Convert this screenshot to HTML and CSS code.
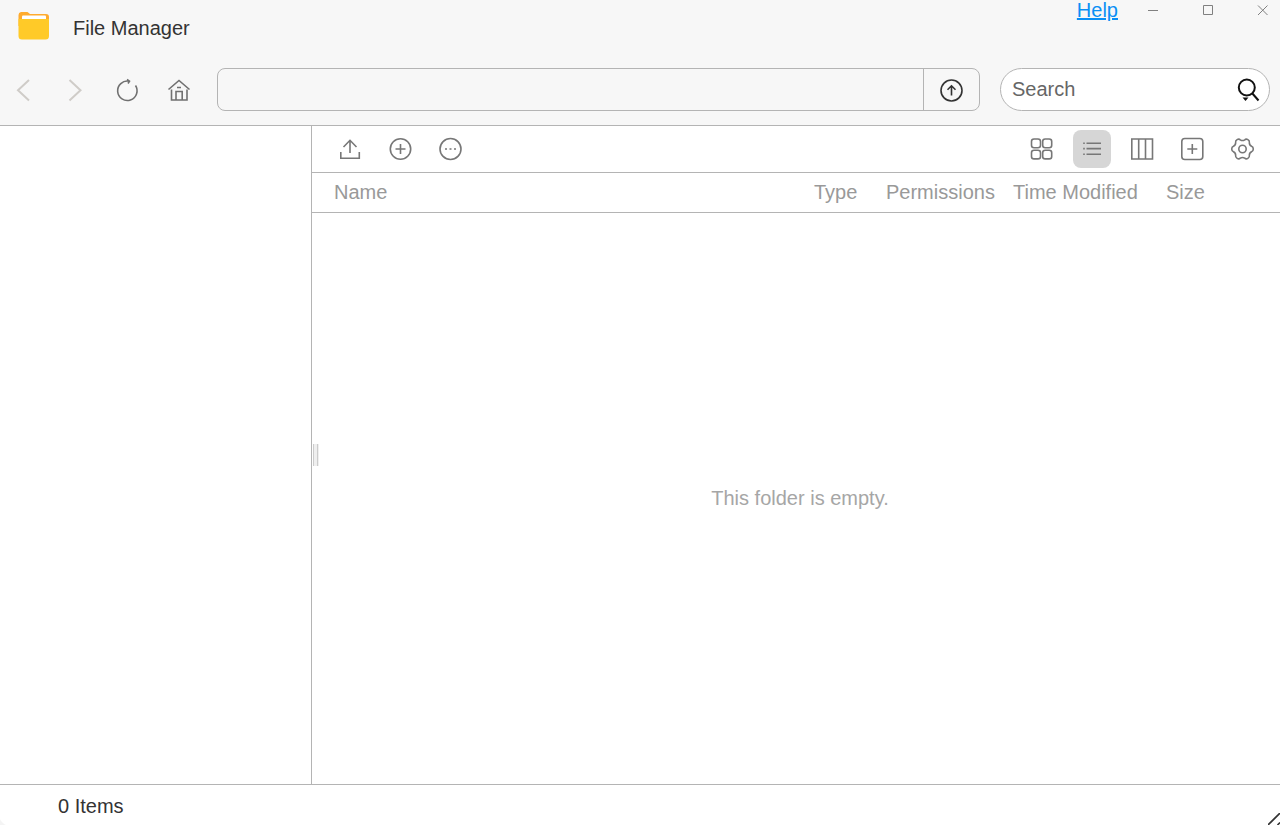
FILE: index.html
```
<!DOCTYPE html>
<html lang="en">
<head>
    <meta charset="UTF-8">
    <meta name="viewport" content="width=device-width, initial-scale=1.0">
    <title>File Manager</title>
    <link rel="stylesheet" href="styles.css">
</head>
<body>
    <header class="header">
        <div class="titlebar">
            <svg class="folder" width="32" height="28" viewBox="0 0 32 28">
                <path d="M3 0H9.500L12 2H28a3 3 0 0 1 3 3V14H0.500V3A3 3 0 0 1 3 0z" fill="#ffab2e"/>
                <rect x="4" y="3.500" width="24" height="8" rx="1" fill="#fff"/>
                <path d="M.5 7H31V24a3.500 3.500 0 0 1-3.500 3.500H4A3.500 3.500 0 0 1 .5 24z" fill="#ffca28"/>
            </svg>
            <h1 class="title">File Manager</h1>
            <div class="window-controls">
                <a class="help" href="#">Help</a>
                <button type="button" class="window-btn" aria-label="Minimize">
                    <svg width="14" height="14" viewBox="0 0 14 14"><path d="M2 7.500H12"/></svg>
                </button>
                <button type="button" class="window-btn" aria-label="Maximize">
                    <svg width="14" height="14" viewBox="0 0 14 14"><path d="M2.500 2.500H11.500V11.500H2.500z"/></svg>
                </button>
                <button type="button" class="window-btn" aria-label="Close">
                    <svg width="14" height="14" viewBox="0 0 14 14"><path d="M2 2.500L11.500 12M11.500 2.500L2 12"/></svg>
                </button>
            </div>
        </div>

        <div class="navbar">
            <button type="button" class="nav-btn" aria-label="Back" disabled>
                <svg width="26" height="26" viewBox="0 0 26 26"><path d="M19 3L8 13.200L19 23.500"/></svg>
            </button>
            <button type="button" class="nav-btn" aria-label="Forward" disabled>
                <svg width="26" height="26" viewBox="0 0 26 26"><path d="M7.500 3L18.500 13.200L7.500 23.500"/></svg>
            </button>
            <button type="button" class="nav-btn" aria-label="Refresh">
                <svg width="26" height="26" viewBox="0 0 26 26"><path d="M15 4.200A9.700 9.700 0 1 0 21.500 8.500M13 2.500L15.500 4.200L14 6.500"/></svg>
            </button>
            <button type="button" class="nav-btn" aria-label="Home">
                <svg width="26" height="26" viewBox="0 0 26 26"><path d="M2.500 12.500L13 3.500L23.500 12.500M5.500 12.500V23H21V12.500M10 23V14.500H16.200V23M11 10.500H15"/></svg>
            </button>
            <form class="path-bar">
                <input type="text" class="path-input" aria-label="Path">
                <button type="button" class="go-btn" aria-label="Go up">
                    <svg width="26" height="26" viewBox="0 0 26 26"><circle cx="12.500" cy="13.500" r="10.500"/><path d="M12.500 18.500V9M8.500 12.700L12.500 8.800L16.500 12.700"/></svg>
                </button>
            </form>
            <form class="search">
                <input type="search" class="search-input" placeholder="Search" aria-label="Search">
                <button type="button" class="search-btn" aria-label="Search options">
                    <svg width="26" height="26" viewBox="0 0 26 26"><circle cx="11.800" cy="11.500" r="8"/><path d="M17 17L23.500 24.500"/><path class="caret" d="M7.500 21.500H13.500L10.500 25z"/></svg>
                </button>
            </form>
        </div>
    </header>

    <div class="content">
        <aside class="sidebar"></aside>
        <main class="main">
            <div class="splitter"></div>
            <div class="toolbar">
                <button type="button" class="tool-btn" aria-label="Upload">
                    <svg width="26" height="26" viewBox="0 0 26 26"><path d="M13 17V4.500M6.500 11L13 4.300L19.500 11M3.800 16V22.300H22.300V16"/></svg>
                </button>
                <button type="button" class="tool-btn" aria-label="New">
                    <svg width="26" height="26" viewBox="0 0 26 26"><circle cx="13.500" cy="13" r="10.200"/><path d="M13.500 8V18M8.500 13H18.500"/></svg>
                </button>
                <button type="button" class="tool-btn" aria-label="More">
                    <svg width="26" height="26" viewBox="0 0 26 26"><circle cx="13.500" cy="13" r="10.500"/><path d="M8 13H10M12.500 13H14.500M17 13H19"/></svg>
                </button>
                <span class="spacer"></span>
                <button type="button" class="tool-btn" aria-label="Icon view">
                    <svg width="26" height="26" viewBox="0 0 26 26"><rect x="2.500" y="3" width="9" height="8.700" rx="2.500"/><rect x="13.700" y="3" width="9" height="8.700" rx="2.500"/><rect x="2.500" y="14.200" width="9" height="8.700" rx="2.500"/><rect x="13.700" y="14.200" width="9" height="8.700" rx="2.500"/></svg>
                </button>
                <button type="button" class="tool-btn active" aria-label="List view">
                    <svg width="26" height="26" viewBox="0 0 26 26"><path d="M7.500 7.200H22M7.500 12.600H22M7.500 18.200H22M4.200 7.200H5.800M4.200 12.600H5.800M4.200 18.200H5.800"/></svg>
                </button>
                <button type="button" class="tool-btn" aria-label="Column view">
                    <svg width="26" height="26" viewBox="0 0 26 26"><path d="M2.800 3H23.500V23H2.800zM9.700 3V23M16.500 3V23"/></svg>
                </button>
                <button type="button" class="tool-btn" aria-label="New tab">
                    <svg width="26" height="26" viewBox="0 0 26 26"><rect x="2.800" y="2.500" width="21" height="21" rx="3"/><path d="M13.300 8V18M8.300 13H18.300"/></svg>
                </button>
                <button type="button" class="tool-btn" aria-label="Settings">
                    <svg width="26" height="26" viewBox="-13.500 -13 26 26"><path d="M-2.200 -9.200Q0 -7.700 2.200 -9.200C4 -10.800 7.350 -8.860 6.860 -6.500Q6.700 -3.900 9.080 -2.700C11.350 -1.940 11.350 1.940 9.080 2.700Q6.700 3.900 6.860 6.500C7.350 8.860 4 10.800 2.200 9.200Q0 7.700 -2.200 9.200C-4 10.800 -7.350 8.860 -6.860 6.500Q-6.700 3.900 -9.080 2.700C-11.350 1.940 -11.350 -1.940 -9.080 -2.700Q-6.700 -3.900 -6.860 -6.500C-7.350 -8.860 -4 -10.800 -2.200 -9.200z"/><circle r="3.700"/></svg>
                </button>
            </div>
            <table class="file-table">
                <thead>
                    <tr>
                        <th class="col-name">Name</th>
                        <th class="col-type">Type</th>
                        <th class="col-permissions">Permissions</th>
                        <th class="col-time">Time Modified</th>
                        <th class="col-size">Size</th>
                    </tr>
                </thead>
            </table>
            <p class="empty">This folder is empty.</p>
        </main>
    </div>

    <footer class="statusbar">
        <span>0 Items</span>
        <svg class="resize" width="12" height="12" viewBox="0 0 12 12"><path d="M0 12L12 0M9.500 12L12 9.500"/></svg>
    </footer>
</body>
</html>
```
FILE: styles.css
```
/* Global Styling */
* {
    margin: 0;
    padding: 0;
    box-sizing: border-box;
}

body {
    display: flex;
    flex-direction: column;
    height: 100vh;
    font-family: "Liberation Sans", Arial, sans-serif;
    font-size: 20px;
    line-height: 24px;
    color: #333333;
    background: #ffffff;
    overflow: hidden;
}

button, input {
    font: inherit;
    color: inherit;
    border: none;
    outline: none;
    background: none;
}

button {
    display: flex;
    justify-content: center;
    align-items: center;
    cursor: pointer;
}

svg {
    display: block;
    flex-shrink: 0;
    fill: none;
    stroke: currentColor;
    stroke-width: 1.6;
}

/* Header */
.header {
    background: #f7f7f7;
    border-bottom: 1px solid #b4b4b4;
}

.titlebar {
    display: flex;
    align-items: center;
    height: 56px;
    padding: 0 10px 0 18px;
}

.folder {
    margin-bottom: 4px;
    stroke: none;
}

.title {
    margin-left: 23px;
    font-size: 20px;
    font-weight: normal;
}

.window-controls {
    display: flex;
    align-items: center;
    align-self: flex-start;
    gap: 41px;
    height: 20px;
    margin-left: auto;
}

.help {
    margin-right: -13px;
    color: #0a8ff5;
    text-decoration-thickness: 2px;
}

.window-btn {
    width: 14px;
    height: 20px;
    color: #808080;
}

.window-btn svg {
    stroke-width: 1;
}

/* Navigation */
.navbar {
    display: flex;
    align-items: center;
    height: 69px;
    padding: 0 10px 2px 7px;
}

.nav-btn {
    width: 32px;
    height: 32px;
    margin-right: 20px;
    color: #707070;
}

.nav-btn:disabled {
    color: #cfccc8;
}

.nav-btn:disabled svg {
    stroke-width: 2;
}

.path-bar {
    display: flex;
    flex: 1;
    height: 43px;
    margin-left: 2px;
    border: 1px solid #b4b4b4;
    border-radius: 8px;
}

.path-input {
    flex: 1;
    min-width: 0;
    padding: 0 12px;
}

.go-btn {
    width: 56px;
    border-left: 1px solid #b4b4b4;
}

.search {
    display: flex;
    align-items: center;
    width: 270px;
    height: 43px;
    margin-left: 20px;
    padding: 0 8px 2px 11px;
    background: #ffffff;
    border: 1px solid #b4b4b4;
    border-radius: 22px;
}

.search-input {
    flex: 1;
    min-width: 0;
}

.search-input::placeholder {
    color: #666666;
}

.search-btn {
    color: #111111;
}

.search-btn svg {
    stroke-width: 2;
}

.search-btn .caret {
    fill: currentColor;
    stroke: none;
}

/* Content */
.content {
    display: flex;
    flex: 1;
    min-height: 0;
}

.sidebar {
    width: 312px;
    border-right: 1px solid #b4b4b4;
}

.main {
    position: relative;
    display: flex;
    flex-direction: column;
    flex: 1;
    min-width: 0;
}

/* Drag handle between the sidebar and the file list */
.splitter {
    position: absolute;
    top: 50%;
    left: 1px;
    width: 6px;
    height: 22px;
    margin-top: -11px;
    background: linear-gradient(90deg, #efefef 3px, #cccccc 3px, #cccccc 4px, #efefef 4px);
    border-left: 1px solid #cccccc;
    cursor: col-resize;
}

.toolbar {
    display: flex;
    align-items: center;
    gap: 12px;
    height: 47px;
    padding: 0 19px;
    border-bottom: 1px solid #b4b4b4;
}

.spacer {
    flex: 1;
}

.tool-btn {
    width: 38px;
    height: 38px;
    border-radius: 8px;
    color: #777777;
}

.tool-btn.active {
    background: #d6d6d6;
}

.file-table {
    width: 100%;
    table-layout: fixed;
    border-collapse: collapse;
    color: #999999;
    border-bottom: 1px solid #b4b4b4;
}

.file-table th {
    height: 39px;
    font-weight: normal;
    text-align: left;
    white-space: nowrap;
}

.file-table .col-name {
    padding-left: 22px;
}

.col-type {
    width: 72px;
}

.col-permissions {
    width: 127px;
}

.col-time {
    width: 153px;
}

.col-size {
    width: 114px;
}

.empty {
    display: flex;
    flex: 1;
    justify-content: center;
    align-items: center;
    padding-left: 8px;
    color: #a6a6a6;
}

/* Status Bar */
.statusbar {
    display: flex;
    justify-content: space-between;
    align-items: center;
    height: 41px;
    padding-left: 58px;
    padding-top: 2px;
    border-top: 1px solid #b4b4b4;
    background: radial-gradient(circle at 12px -2px, #ffffff 13px, #f4f4f4 14px) left bottom / 10px 10px no-repeat;
}

.resize {
    align-self: flex-end;
}
```
